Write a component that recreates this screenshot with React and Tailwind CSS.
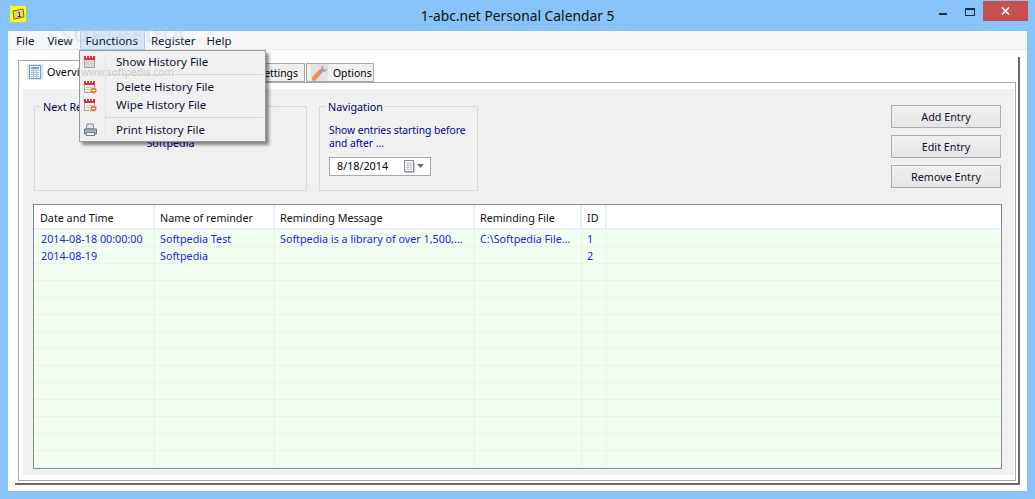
const font = { fontFamily: '"Noto Sans", sans-serif' };

const columns = [
  { title: 'Date and Time', width: 'w-[121px]' },
  { title: 'Name of reminder', width: 'w-[120px]' },
  { title: 'Reminding Message', width: 'w-[200px]' },
  { title: 'Reminding File', width: 'w-[107px]' },
  { title: 'ID', width: 'w-[25px]' },
];

const rows = [
  ['2014-08-18 00:00:00', 'Softpedia Test', 'Softpedia is a library of over 1,500,…', 'C:\\Softpedia File…', '1'],
  ['2014-08-19', 'Softpedia', '', '', '2'],
  ...Array.from({ length: 13 }, () => ['', '', '', '', '']),
];

function AppIcon() {
  return (
    <div className="flex h-[16px] w-[16px] items-center justify-center bg-[#ffff00]">
      <svg width="13" height="12" viewBox="0 0 13 12">
        <path d="M1 3 L11 1 L12 9 L2 11 Z" fill="#e8d860" stroke="#6a6448" strokeWidth="1" />
        <path d="M6 4.5 H7.5 V8.5 M5.5 8.5 H9" fill="none" stroke="#444" strokeWidth="1" />
      </svg>
    </div>
  );
}

function CalendarIcon({ badge }) {
  return (
    <svg width="13" height="14" viewBox="0 0 13 14">
      <rect x="0.5" y="1.5" width="10" height="11" fill={badge ? '#f8f6f4' : '#d8d4d2'} stroke="#a8a2a0" />
      <rect x="0" y="1" width="11" height="4" fill="#d8303c" />
      <path d="M2.5 0.5 V3 M5.5 0.5 V3 M8.5 0.5 V3" stroke="#fff" />
      {badge && <path d="M2 7.5 H8 M2 9.5 H6" stroke="#c8c4c0" />}
      {badge && <circle cx="9.5" cy="10.5" r="3" fill="#ee8030" />}
      {badge && <path d="M8 10.5 H11" stroke="#fff" />}
    </svg>
  );
}

function PrinterIcon() {
  return (
    <svg width="13" height="14" viewBox="0 0 13 14">
      <path d="M3 1 H9 L10 6 H2.5 Z" fill="#dfe6ee" stroke="#8090a4" />
      <path d="M0.5 6 H12.5 V11 H0.5 Z" fill="#a8b0bc" stroke="#6c7684" />
      <rect x="2.5" y="9.5" width="8" height="3" fill="#eef0f2" stroke="#78808c" />
    </svg>
  );
}

function TableIcon() {
  return (
    <svg width="16" height="16" viewBox="0 0 16 16">
      <rect x="0" y="0" width="16" height="16" fill="#d8e2ec" />
      <rect x="2.5" y="1.5" width="11" height="13" fill="#f4f8fc" stroke="#7e9cc0" />
      <rect x="4" y="3" width="8" height="2" fill="#7a9fd0" />
      <path d="M4 6.5 H12 M4 8.5 H12 M4 10.5 H12 M4 12.5 H12" stroke="#9cc4a8" />
      <path d="M6.5 5 V14 M9.5 5 V14" stroke="#a8c4e0" />
    </svg>
  );
}

function WrenchIcon() {
  return (
    <svg width="17" height="17" viewBox="0 0 17 17">
      <rect x="0" y="0" width="17" height="17" fill="#e2e2e2" />
      <path d="M3 14.5 L9 8" stroke="#f0924c" strokeWidth="4.5" strokeLinecap="round" />
      <path d="M9 8 L12 5" stroke="#9a9a9a" strokeWidth="3" />
      <path d="M10 3 L13 1 L12 4 L14 6 L16 4 Q16 8 12 8 Z" fill="#a8a8a8" />
    </svg>
  );
}

function DatePickerIcon() {
  return (
    <div className="flex items-center gap-[2px]">
      <svg width="11" height="13" viewBox="0 0 11 13">
        <rect x="0.5" y="0.5" width="9" height="11" fill="#f6f7f8" stroke="#8a8e94" />
        <path d="M2 3.5 H8 M2 5.5 H8 M2 7.5 H8 M2 9.5 H8" stroke="#c4c8ce" />
        <path d="M3.5 2 V10 M6.5 2 V10" stroke="#d0d4d8" />
        <path d="M1 12.5 H10.5 V2" fill="none" stroke="#c8c8c8" />
      </svg>
      <svg width="8" height="5" viewBox="0 0 8 5">
        <path d="M0 0 H7 L3.5 4 Z" fill="#5a7088" />
      </svg>
    </div>
  );
}

function WindowControls() {
  return (
    <div className="flex items-start">
      <div className="mt-[12px] h-[2px] w-[8px] bg-[#1e2c3c]" />
      <div className="ml-[18px] mt-[7px] h-[8px] w-[10px] border border-t-2 border-[#1e2c3c]" />
      <div className="ml-[8px] flex h-[20px] w-[45px] items-center justify-center bg-[#c75050]">
        <svg width="9" height="8" viewBox="0 0 9 8">
          <path d="M1 0.5 L8 7.5 M8 0.5 L1 7.5" stroke="#fff" strokeWidth="1.6" />
        </svg>
      </div>
    </div>
  );
}

function Tab({ icon, label, active, className }) {
  return (
    <div
      className={`flex items-center border border-[#a8a8a8] ${
        active ? 'relative z-[1] -mb-px h-[23px] border-b-0 bg-white' : 'h-[19px] bg-[#f0f0f0]'
      } ${className}`}
    >
      {icon}
      <span className={active ? 'text-[10.75px]' : 'pt-[2px] text-[10.4px]'}>{label}</span>
    </div>
  );
}

function GroupBox({ label, className, children }) {
  return (
    <div className={`relative mt-px h-[85px] border border-[#d8d8d8] ${className}`}>
      <span className="absolute left-[6px] top-[-7px] bg-[#f0f0f0] px-[2px] leading-[14px] text-[#000060]">{label}</span>
      {children}
    </div>
  );
}

function Button({ label }) {
  return (
    <div className="flex h-[23px] w-[110px] items-center justify-center border border-[#acacac] bg-gradient-to-b from-[#f0f0f0] to-[#e5e5e5] pt-px text-[#10102a]">
      {label}
    </div>
  );
}

function MenuItem({ icon, label }) {
  return (
    <div className="flex h-[18px] items-center">
      <div className="flex w-[21px] justify-center">{icon}</div>
      <span className="ml-[15px] text-[11.5px] text-[#101030]">{label}</span>
    </div>
  );
}

function FunctionsMenu() {
  return (
    <div className="absolute left-[79px] top-[50px] z-10 h-[92px] w-[187px] border border-[#979797] bg-[#f0f0f0] shadow-[3px_3px_3px_rgba(0,0,0,0.45)]">
      <div className="absolute bottom-[2px] left-[25px] top-[2px] w-px bg-[#e2e3e3]" />
      <div className="relative pt-[2px]">
        <MenuItem icon={<CalendarIcon />} label="Show History File" />
        <div className="my-[3px] ml-[25px] mr-[2px] h-px bg-[#d7d7d7]" />
        <MenuItem icon={<CalendarIcon badge />} label="Delete History File" />
        <MenuItem icon={<CalendarIcon badge />} label="Wipe History File" />
        <div className="my-[3px] ml-[25px] mr-[2px] h-px bg-[#d7d7d7]" />
        <MenuItem icon={<PrinterIcon />} label="Print History File" />
      </div>
      <span className="absolute left-[1px] top-[15px] text-[10px] leading-[12px] text-[#c8c8c8]">www.softpedia.com</span>
    </div>
  );
}

function EntriesTable() {
  return (
    <div className="ml-[10px] mr-[12px] h-[265px] overflow-hidden border border-[#828790] bg-[#f0fff0]">
      <div className="flex h-[25px] border-b-2 border-[#e8f0fc] bg-white text-[#101010]">
        {columns.map((column, index) => (
          <div
            key={column.title}
            className={`${column.width} shrink-0 border-r-2 border-[#e8f0fc] leading-[27px] ${index === 0 ? 'pl-[6px]' : 'pl-[5px]'}`}
          >
            {column.title}
          </div>
        ))}
      </div>
      {rows.map((row, index) => (
        <div key={index} className="flex h-[17px] border-b border-[#ebf3ea] text-[#2020ee]">
          {row.map((cell, cellIndex) => (
            <div
              key={cellIndex}
              className={`${columns[cellIndex].width} shrink-0 whitespace-nowrap border-r border-[#ebf3ea] leading-[18px] ${cellIndex === 0 ? 'pl-[7px]' : 'pl-[5px]'}`}
            >
              {cell}
            </div>
          ))}
        </div>
      ))}
    </div>
  );
}

export default function App() {
  return (
    <div style={font} className="relative flex h-[499px] w-[1035px] flex-col overflow-hidden bg-[#88c3f9] text-[10.75px] text-black">
      <div className="relative flex h-[31px] shrink-0 items-start justify-between pl-[10px] pr-[7px]">
        <div className="pt-[6px]">
          <AppIcon />
        </div>
        <span className="absolute left-0 right-0 top-[5px] text-center text-[13.8px] leading-[22px] text-[#111]">
          1-abc.net Personal Calendar 5
        </span>
        <div className="relative mt-px">
          <WindowControls />
        </div>
      </div>

      <div className="relative mx-[8px] mb-[8px] flex grow flex-col bg-white">
        <div className="flex h-[19px] shrink-0 items-center border-b border-[#e8e8e8] bg-[#f5f6f7] pl-px pt-px text-[11.5px] text-[#101030]">
          <span className="px-[7px]">File</span>
          <span className="ml-[-1px] px-[7px]">View</span>
          <span className="mt-[-2px] h-[20px] border border-[#a8cdf0] bg-[#d5e7f8] pl-[5px] pr-[6px] leading-[19px]">Functions</span>
          <span className="ml-[-1px] px-[7px]">Register</span>
          <span className="ml-[-3px] px-[7px]">Help</span>
        </div>
        <span className="absolute left-[52px] top-[-8px] text-[20px] font-bold leading-[24px] tracking-[2px] text-[#b8c8d8]/30">SOFTPEDIA</span>

        <div className="ml-[7px] mr-[7px] mt-[7px] flex h-[428px] flex-col border-b-2 border-r-2 border-b-[#696969] border-r-[#696969] pb-[2px] pl-px pr-px">
          <div className="flex h-[25px] shrink-0 items-end gap-[1px] pl-[2px]">
            <Tab active className="w-[92px] gap-[4px] pl-[8px]" icon={<TableIcon />} label="Overview" />
            <Tab className="w-[60px] pl-[4px]" label="Calendar" />
            <Tab className="w-[80px] pl-[4px]" label="History" />
            <Tab className="w-[52px] justify-end pr-[6px]" label="Settings" />
            <Tab className="w-[68px] gap-[5px] pl-[4px]" icon={<WrenchIcon />} label="Options" />
          </div>
          <div className="ml-[2px] mr-px flex grow flex-col border border-[#a8a8a8] bg-white pb-[5px] pl-[4px] pr-px pt-[6px]">
            <div className="flex grow flex-col bg-[#f0f0f0]">
              <div className="flex h-[115px] shrink-0 items-start pl-[11px] pr-[13px] pt-[16px]">
                <GroupBox label="Next Reminder" className="w-[273px]">
                  <div className="mt-[28px] text-center text-[#000080]">Softpedia</div>
                </GroupBox>
                <GroupBox label="Navigation" className="ml-[12px] w-[159px]">
                  <div className="pl-[9px] pt-[17px] text-[10.25px] leading-[13px] text-[#000090]">
                    <div className="whitespace-nowrap">Show entries starting before</div>
                    <div>and after …</div>
                  </div>
                  <div className="ml-[9px] mt-[7px] flex h-[19px] w-[102px] items-center justify-between border border-[#a8a8a8] bg-white pl-[7px] pr-[5px]">
                    <span>8/18/2014</span>
                    <DatePickerIcon />
                  </div>
                </GroupBox>
                <div className="ml-auto flex flex-col gap-[7px]">
                  <Button label="Add Entry" />
                  <Button label="Edit Entry" />
                  <Button label="Remove Entry" />
                </div>
              </div>
              <EntriesTable />
            </div>
          </div>
        </div>
      </div>

      <FunctionsMenu />
    </div>
  );
}
